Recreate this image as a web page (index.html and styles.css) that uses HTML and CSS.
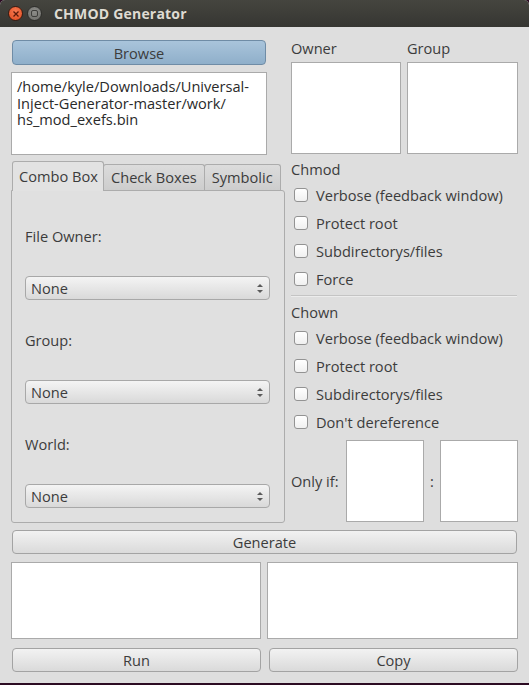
FILE: index.html
```html
<!DOCTYPE html>
<html>
<head>
<meta charset="utf-8">
<title>CHMOD Generator</title>
<link rel="stylesheet" href="styles.css">
</head>
<body>
<div class="window">
  <div class="titlebar">
    <span class="wbtn close"><svg width="8" height="8" viewBox="0 0 8 8"><path d="M1.5 1.5L6.5 6.5M6.5 1.5L1.5 6.5" stroke="#5a1a0a" stroke-width="1.3"/></svg></span>
    <span class="wbtn mini"><span class="mini-inner"></span></span>
    <span class="title">CHMOD Generator</span>
  </div>
  <div class="content">
    <div class="top">
      <div class="left">
        <button class="btn browse">Browse</button>
        <div class="pathbox">/home/kyle/Downloads/Universal-<br>Inject-Generator-master/work/<br>hs_mod_exefs.bin</div>
        <div class="tabbar">
          <div class="tab active">Combo Box</div>
          <div class="tab">Check Boxes</div>
          <div class="tab">Symbolic</div>
        </div>
        <div class="pane">
          <div class="plabel">File Owner:</div>
          <div class="combo"><span>None</span><span class="arrows"><i class="up"></i><i class="down"></i></span></div>
          <div class="plabel">Group:</div>
          <div class="combo"><span>None</span><span class="arrows"><i class="up"></i><i class="down"></i></span></div>
          <div class="plabel">World:</div>
          <div class="combo"><span>None</span><span class="arrows"><i class="up"></i><i class="down"></i></span></div>
        </div>
      </div>
      <div class="right">
        <div class="og">
          <div class="ogcol">
            <div class="oglabel">Owner</div>
            <div class="box ogbox"></div>
          </div>
          <div class="ogcol">
            <div class="oglabel">Group</div>
            <div class="box ogbox"></div>
          </div>
        </div>
        <div class="section">Chmod</div>
        <label class="check"><span class="cb"></span>Verbose (feedback window)</label>
        <label class="check"><span class="cb"></span>Protect root</label>
        <label class="check"><span class="cb"></span>Subdirectorys/files</label>
        <label class="check"><span class="cb"></span>Force</label>
        <div class="sep"></div>
        <div class="section">Chown</div>
        <label class="check"><span class="cb"></span>Verbose (feedback window)</label>
        <label class="check"><span class="cb"></span>Protect root</label>
        <label class="check"><span class="cb"></span>Subdirectorys/files</label>
        <label class="check"><span class="cb"></span>Don't dereference</label>
        <div class="onlyif">
          <span class="oilabel">Only if:</span>
          <div class="box oibox"></div>
          <span class="colon">:</span>
          <div class="box oibox"></div>
        </div>
      </div>
    </div>
    <button class="btn generate">Generate</button>
    <div class="outputs">
      <div class="box out"></div>
      <div class="box out"></div>
    </div>
    <div class="actions">
      <button class="btn act">Run</button>
      <button class="btn act">Copy</button>
    </div>
  </div>
</div>
</body>
</html>
```

FILE: styles.css
```css
* { box-sizing: border-box; }
html, body { margin: 0; padding: 0; }
body {
  background: #2c0b22;
  font-family: "Open Sans", "DejaVu Sans", sans-serif;
  font-size: 14.6px;
  color: #3c3c3c;
  width: 529px;
  height: 685px;
  overflow: hidden;
}
.window {
  width: 529px;
  height: 683px;
  background: #dedede;
  border-radius: 5px 5px 0 0;
  overflow: hidden;
}
.titlebar {
  height: 27px;
  background: linear-gradient(#45453f, #363632);
  display: flex;
  align-items: center;
  padding-left: 8px;
}
.wbtn {
  width: 15px;
  height: 15px;
  border-radius: 50%;
  display: flex;
  align-items: center;
  justify-content: center;
}
.close {
  background: radial-gradient(circle at 50% 35%, #f57a52, #df4a1e);
  border: 1px solid #3a1a10;
}
.mini {
  margin-left: 4px;
  background: radial-gradient(circle at 50% 35%, #8d8d89, #6c6c68);
  border: 1px solid #2e2e2b;
}
.mini-inner {
  width: 7px;
  height: 7px;
  border: 1.3px solid #3e3e3b;
  border-radius: 2px;
}
.title {
  margin-left: 12px;
  color: #dfdbd2;
  font-weight: bold;
  font-size: 14px;
  letter-spacing: 0.2px;
}
.content {
  padding: 13px 11px 0 11px;
}
.top {
  display: flex;
  gap: 6px;
}
.left {
  width: 274px;
  display: flex;
  flex-direction: column;
}
.btn {
  font-family: inherit;
  font-size: 14.6px;
  color: #3c3c3c;
  border: 1px solid #a3a3a3;
  border-radius: 4px;
  background: linear-gradient(#f2f2f2, #dadada);
  height: 25px;
  padding: 0;
  display: block;
}
.browse {
  margin: 0 19px 0 1px;
  background: linear-gradient(#a9c4db, #8fafca);
  border-color: #6f8ca6;
}
.box {
  background: #ffffff;
  border: 1px solid #aaaaaa;
}
.pathbox {
  margin-top: 7px;
  width: 256px;
  height: 83px;
  background: #ffffff;
  border: 1px solid #aaaaaa;
  padding: 5px 0 0 5px;
  line-height: 16.5px;
  color: #2a2a2a;
  white-space: nowrap;
}
.tabbar {
  margin-top: 6px;
  height: 29px;
  display: flex;
  align-items: flex-end;
  padding-left: 1px;
  position: relative;
  z-index: 1;
}
.tab {
  height: 26px;
  border: 1px solid #acacac;
  border-bottom: none;
  border-radius: 3px 3px 0 0;
  background: linear-gradient(#dcdcdc, #cdcdcd);
  padding: 2px 7px 0 7px;
  margin-left: -1px;
  white-space: nowrap;
}
.tab.active {
  height: 30px;
  margin-left: 0;
  margin-bottom: -1px;
  background: #e2e2e2;
  padding: 4px 0 0 6px;
  width: 92px;
  position: relative;
  z-index: 2;
}
.pane {
  height: 333px;
  border: 1px solid #acacac;
  border-radius: 0 3px 3px 3px;
  background: #e0e0e0;
  padding: 35px 14px 0 13px;
  display: flex;
  flex-direction: column;
  gap: 30px;
}
.plabel {
  height: 20px;
  line-height: 20px;
}
.combo {
  height: 24px;
  border: 1px solid #a8a8a8;
  border-radius: 4px;
  background: linear-gradient(#f4f4f4, #d9d9d9);
  display: flex;
  align-items: center;
  justify-content: space-between;
  padding: 0 6px 0 5px;
}
.arrows {
  display: flex;
  flex-direction: column;
  gap: 3px;
}
.arrows i {
  display: block;
  width: 0;
  height: 0;
  border-left: 3px solid transparent;
  border-right: 3px solid transparent;
}
.arrows .up { border-bottom: 3px solid #5a5a5a; }
.arrows .down { border-top: 3px solid #5a5a5a; }
.right {
  width: 227px;
  display: flex;
  flex-direction: column;
}
.og {
  display: flex;
  gap: 6px;
}
.ogcol {
  display: flex;
  flex-direction: column;
}
.ogcol:first-child { width: 110px; }
.ogcol:last-child { width: 111px; }
.oglabel {
  height: 22px;
  line-height: 16px;
}
.ogbox {
  height: 92px;
}
.section {
  margin-top: 6px;
  height: 20px;
  line-height: 19px;
}
.check {
  height: 28px;
  display: flex;
  align-items: center;
  padding-left: 3px;
  padding-top: 2px;
  white-space: nowrap;
}
.cb {
  width: 14px;
  height: 14px;
  border: 1px solid #939393;
  border-radius: 3px;
  background: linear-gradient(#ffffff, #f0f0f0);
  margin-right: 8px;
  flex: none;
}
.sep {
  margin-top: 3px;
  height: 2px;
  border-top: 1px solid #c4c4c4;
  border-bottom: 1px solid #ececec;
  margin-right: 1px;
}
.onlyif {
  margin-top: 5px;
  height: 82px;
  display: flex;
  align-items: center;
}
.oilabel {
  width: 55px;
  white-space: nowrap;
}
.oibox {
  width: 78px;
  height: 82px;
}
.colon {
  width: 16px;
  text-align: center;
}
.generate {
  margin: 7px 1px 0 1px;
  width: 505px;
  height: 24px;
}
.outputs {
  margin-top: 8px;
  display: flex;
  gap: 6px;
}
.out {
  height: 77px;
  width: 250px;
}
.out:last-child { width: 251px; }
.actions {
  margin-top: 9px;
  display: flex;
  gap: 8px;
  padding-left: 1px;
}
.act {
  width: 249px;
  height: 24px;
}
```
